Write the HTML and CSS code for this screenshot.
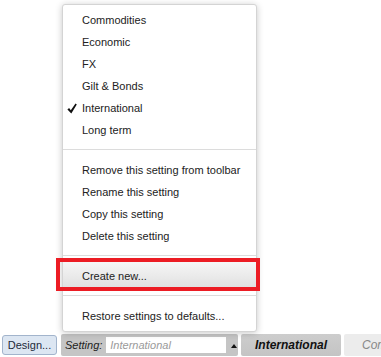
FILE: index.html
```html
<!DOCTYPE html>
<html lang="en">
<head>
	<meta charset="UTF-8">
	<title>Settings menu</title>
	<link rel="stylesheet" href="styles.css">
</head>
<body>
	<div class="page">
		<!-- settings dropdown, opened upwards from the toolbar -->
		<div class="menu">
			<ul class="group">
				<li>Commodities</li>
				<li>Economic</li>
				<li>FX</li>
				<li>Gilt &amp; Bonds</li>
				<li class="checked">
					<svg class="tick" width="10" height="11" viewBox="0 0 10 11"><path d="M0.4 6.4 L2.1 5.1 L3.8 7.2 L8.5 0.4 L9.8 1.4 L4.3 10.6 Z" fill="#111"/></svg>
					International
				</li>
				<li>Long term</li>
			</ul>
			<div class="sep"></div>
			<ul class="group">
				<li>Remove this setting from toolbar</li>
				<li>Rename this setting</li>
				<li>Copy this setting</li>
				<li>Delete this setting</li>
			</ul>
			<div class="sep"></div>
			<ul class="group group-active">
				<li class="active">Create new...</li>
			</ul>
			<div class="sep"></div>
			<ul class="group">
				<li>Restore settings to defaults...</li>
			</ul>
		</div>
		<div class="highlight"></div>

		<div class="toolbar">
			<div class="btn-design">Design...</div>
			<div class="setting">
				<span class="setting-label">Setting:</span>
				<span class="setting-input">International</span>
				<span class="arrow-up"></span>
			</div>
			<div class="btn-current">International</div>
			<div class="btn-other">Commodities</div>
		</div>
	</div>
</body>
</html>
```

FILE: styles.css
```css
* {
	box-sizing: border-box;
}
body {
	margin: 0;
	font-family: "Liberation Sans", Arial, sans-serif;
	font-size: 11px;
	color: #222;
	background: #fff;
}
.page {
	position: relative;
	width: 381px;
	height: 357px;
	overflow: hidden;
	display: flex;
	flex-direction: column;
	justify-content: flex-end;
}

/* dropdown */
.menu {
	position: absolute;
	left: 62px;
	top: 4px;
	width: 195px;
	background: #fff;
	border: 1px solid #d4d4d4;
	border-radius: 3px;
	box-shadow: 0 1px 7px rgba(0, 0, 0, .22);
}
.group {
	list-style: none;
	margin: 0;
	padding: 4px 0;
}
.group li {
	position: relative;
	height: 22px;
	line-height: 22px;
	padding-left: 19px;
	white-space: nowrap;
}
.group-active {
	padding-top: 1px;
}
.group li.active {
	height: 25px;
	padding-top: 3px;
	background: linear-gradient(#f6f6f6, #e1e1e1);
}
.tick {
	position: absolute;
	left: 4px;
	top: 6px;
}
.sep {
	height: 1px;
	margin: 4px 0 5px;
	background: #dcdcdc;
}
.highlight {
	position: absolute;
	left: 56px;
	top: 258px;
	width: 204px;
	height: 33px;
	border: 4px solid #ec1c24;
}

/* toolbar */
.toolbar {
	display: flex;
	align-items: center;
	height: 22px;
	margin-bottom: 1px;
	white-space: nowrap;
}
.toolbar > div {
	flex: none;
}
.btn-design {
	height: 20px;
	line-height: 18px;
	margin-left: 2px;
	width: 55px;
	text-align: center;
	background: #dce6f2;
	border: 1px solid #a2b4cc;
	border-radius: 3px;
	color: #1e2a3a;
}
.setting {
	display: flex;
	align-items: center;
	height: 22px;
	width: 177px;
	margin-left: 4px;
	padding-left: 4px;
	background: #c5c5c5;
	border-radius: 2px;
}
.setting-label {
	font-style: italic;
	color: #222;
}
.setting-input {
	flex: none;
	width: 120px;
	height: 16px;
	line-height: 16px;
	margin-left: 4px;
	padding-left: 4px;
	background: #fff;
	font-style: italic;
	color: #9a9a9a;
}
.arrow-up {
	flex: none;
	width: 0;
	height: 0;
	margin-left: 5px;
	margin-top: 2px;
	border-left: 3px solid transparent;
	border-right: 3px solid transparent;
	border-bottom: 4px solid #111;
}
.btn-current {
	width: 100px;
	height: 22px;
	line-height: 22px;
	margin-left: 3px;
	text-align: center;
	background: linear-gradient(#cdcdcd, #c4c4c4);
	border-radius: 2px;
	font-size: 12px;
	font-weight: bold;
	font-style: italic;
	color: #111;
}
.btn-other {
	width: 37px;
	height: 22px;
	line-height: 22px;
	margin-left: 3px;
	padding-left: 18px;
	overflow: hidden;
	background: #ececec;
	border-radius: 2px 0 0 2px;
	font-size: 12px;
	font-style: italic;
	color: #888;
}
```
